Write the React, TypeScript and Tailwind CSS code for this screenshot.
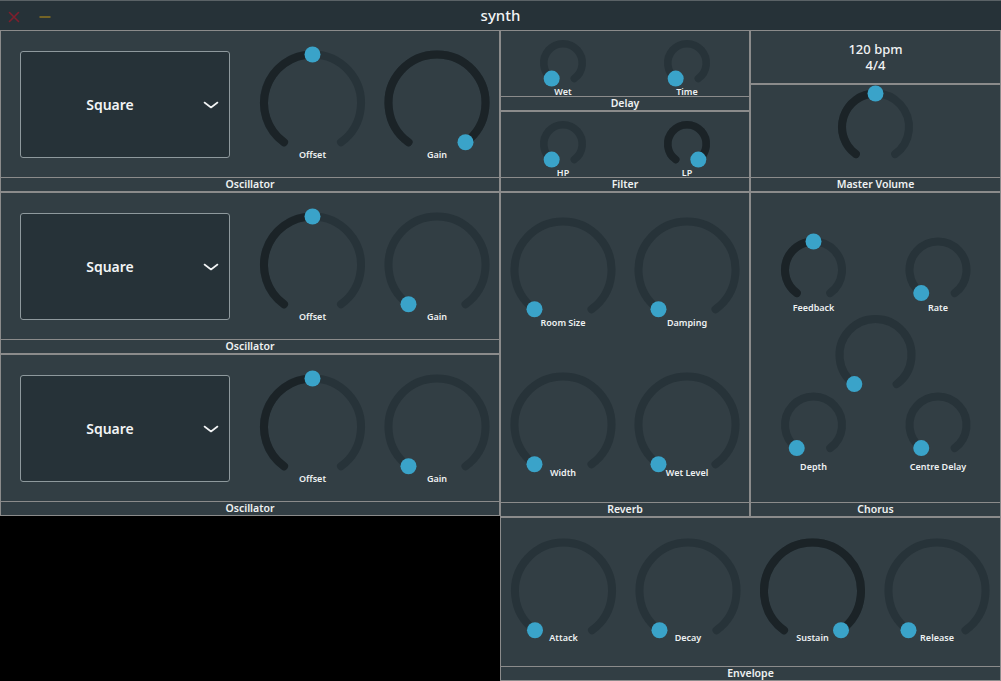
import React from "react";

function pt(cx: number, cy: number, r: number, deg: number): [number, number] {
  const a = (deg * Math.PI) / 180;
  return [cx + r * Math.sin(a), cy - r * Math.cos(a)];
}

function arcPath(cx: number, cy: number, r: number, a0: number, a1: number) {
  const [x0, y0] = pt(cx, cy, r, a0);
  const [x1, y1] = pt(cx, cy, r, a1);
  const large = a1 - a0 > 180 ? 1 : 0;
  return `M ${x0} ${y0} A ${r} ${r} 0 ${large} 1 ${x1} ${y1}`;
}

type KnobProps = {
  w: number;
  h: number;
  cy: number;
  d: number;
  sw?: number;
  v: number;
  label?: string;
  ldy?: number;
};

function Knob({ w, h, cy, d, sw = 8, v, label, ldy = 0 }: KnobProps) {
  const cx = w / 2;
  const r = d / 2 - sw / 2;
  const a0 = -144;
  const a1 = 144;
  const av = a0 + (a1 - a0) * v;
  const [tx, ty] = pt(cx, cy, r, av);
  return (
    <div className="relative shrink-0" style={{ width: w, height: h }}>
      <svg width={w} height={h} className="absolute left-0 top-0 overflow-visible">
        <path d={arcPath(cx, cy, r, a0, a1)} stroke="#273339" strokeWidth={sw} fill="none" strokeLinecap="round" />
        {v > 0 && (
          <path d={arcPath(cx, cy, r, a0, av)} stroke="#1b2327" strokeWidth={sw} fill="none" strokeLinecap="round" />
        )}
        <circle cx={tx} cy={ty} r={8} fill="#3aa3c9" />
      </svg>
      {label && (
        <div
          className="absolute left-0 right-0 text-center text-[9px] font-semibold leading-[12px] text-[#eef1f2]"
          style={{ top: cy + ldy - 6 }}
        >
          {label}
        </div>
      )}
    </div>
  );
}

function Panel({
  title,
  className,
  children,
}: {
  title?: string;
  className: string;
  children?: React.ReactNode;
}) {
  return (
    <div className={`border border-[#8b8b8b] bg-[#323e44] flex flex-col shrink-0 ${className}`}>
      <div className="flex-1 min-h-0 relative">{children}</div>
      {title && (
        <div className="h-[14px] shrink-0 border-t border-[#8b8b8b] text-center text-[10.5px] font-semibold leading-[13px] text-[#eef1f2]">
          {title}
        </div>
      )}
    </div>
  );
}

function Oscillator({ gain }: { gain: number }) {
  return (
    <Panel title="Oscillator" className="h-[162px]">
      <div className="flex items-center h-full">
        <div className="ml-[19px] w-[210px] h-[107px] rounded-[3px] border border-[#8e999d] bg-[#263238] flex items-center relative">
          <div className="flex-1 pr-[30px] text-center text-[14px] font-semibold text-[#f2f4f5]">Square</div>
          <svg width="16" height="8" viewBox="0 0 16 8" className="absolute left-[182px] top-[49px]">
            <polyline points="1.5,1.5 8,6.5 14.5,1.5" fill="none" stroke="#f2f4f5" strokeWidth="1.6" strokeLinecap="round" strokeLinejoin="round" />
          </svg>
        </div>
        <div className="ml-[20px] flex">
          <Knob w={125} h={146} cy={72} d={105} v={0.5} label="Offset" ldy={52} />
          <Knob w={124} h={146} cy={72} d={105} v={gain} label="Gain" ldy={52} />
        </div>
      </div>
    </Panel>
  );
}

export default function App() {
  return (
    <div className="w-[1001px] h-[681px] bg-black overflow-hidden flex flex-col font-['Noto_Sans',sans-serif]">
      <div className="h-[30px] shrink-0 bg-[#263238] border-t border-[#5a6266] relative flex items-center justify-center">
        <svg width="12" height="12" viewBox="0 0 12 12" className="absolute left-[8px] top-[10px]">
          <path d="M1.5 1.5 L10.5 10.5 M10.5 1.5 L1.5 10.5" stroke="#7e1f2d" strokeWidth="1.6" strokeLinecap="round" />
        </svg>
        <svg width="12" height="4" viewBox="0 0 12 4" className="absolute left-[39px] top-[14px]">
          <path d="M0.5 2 L11.5 2" stroke="#8a7223" strokeWidth="1.6" />
        </svg>
        <div className="text-[15px] font-medium text-[#f2f4f5] leading-none">synth</div>
      </div>
      <div className="flex flex-1 min-h-0">
        <div className="w-[500px] shrink-0 flex flex-col">
          <Oscillator gain={1} />
          <Oscillator gain={0} />
          <Oscillator gain={0} />
        </div>
        <div className="w-[501px] shrink-0 flex flex-col">
          <div className="flex h-[487px] shrink-0">
            <div className="w-[250px] shrink-0 flex flex-col">
              <Panel title="Delay" className="h-[81px]">
                <div className="flex">
                  <Knob w={124} h={65} cy={32} d={46} sw={7.5} v={0} label="Wet" ldy={29} />
                  <Knob w={124} h={65} cy={32} d={46} sw={7.5} v={0} label="Time" ldy={29} />
                </div>
              </Panel>
              <Panel title="Filter" className="h-[81px]">
                <div className="flex">
                  <Knob w={124} h={65} cy={32} d={46} sw={7.5} v={0} label="HP" ldy={29} />
                  <Knob w={124} h={65} cy={32} d={46} sw={7.5} v={1} label="LP" ldy={29} />
                </div>
              </Panel>
              <Panel title="Reverb" className="flex-1">
                <div className="flex flex-col">
                  <div className="flex">
                    <Knob w={124} h={155} cy={77} d={105} v={0} label="Room Size" ldy={53} />
                    <Knob w={124} h={155} cy={77} d={105} v={0} label="Damping" ldy={53} />
                  </div>
                  <div className="flex">
                    <Knob w={124} h={154} cy={77} d={105} v={0} label="Width" ldy={48} />
                    <Knob w={124} h={154} cy={77} d={105} v={0} label="Wet Level" ldy={48} />
                  </div>
                </div>
              </Panel>
            </div>
            <div className="w-[251px] shrink-0 flex flex-col">
              <Panel className="h-[54px]">
                <div className="h-full flex flex-col items-center justify-center text-[13px] leading-[16px] font-medium text-[#f2f4f5]">
                  <div>120 bpm</div>
                  <div>4/4</div>
                </div>
              </Panel>
              <Panel title="Master Volume" className="h-[108px]">
                <Knob w={249} h={92} cy={42} d={75} v={0.5} />
              </Panel>
              <Panel title="Chorus" className="flex-1">
                <div className="flex flex-col">
                  <div className="flex">
                    <Knob w={125} h={155} cy={77} d={65} v={0.5} label="Feedback" ldy={38} />
                    <Knob w={124} h={155} cy={77} d={65} v={0} label="Rate" ldy={38} />
                  </div>
                  <div className="flex">
                    <Knob w={125} h={154} cy={77} d={65} v={0} label="Depth" ldy={42} />
                    <Knob w={124} h={154} cy={77} d={65} v={0} label="Centre Delay" ldy={42} />
                  </div>
                </div>
                <div className="absolute left-0 top-[112px]">
                  <Knob w={249} h={100} cy={50} d={80} v={0} />
                </div>
              </Panel>
            </div>
          </div>
          <Panel title="Envelope" className="h-[164px]">
            <div className="flex">
              <Knob w={125} h={148} cy={73} d={105} v={0} label="Attack" ldy={47} />
              <Knob w={124} h={148} cy={73} d={105} v={0} label="Decay" ldy={47} />
              <Knob w={125} h={148} cy={73} d={105} v={1} label="Sustain" ldy={47} />
              <Knob w={124} h={148} cy={73} d={105} v={0} label="Release" ldy={47} />
            </div>
          </Panel>
        </div>
      </div>
    </div>
  );
}
